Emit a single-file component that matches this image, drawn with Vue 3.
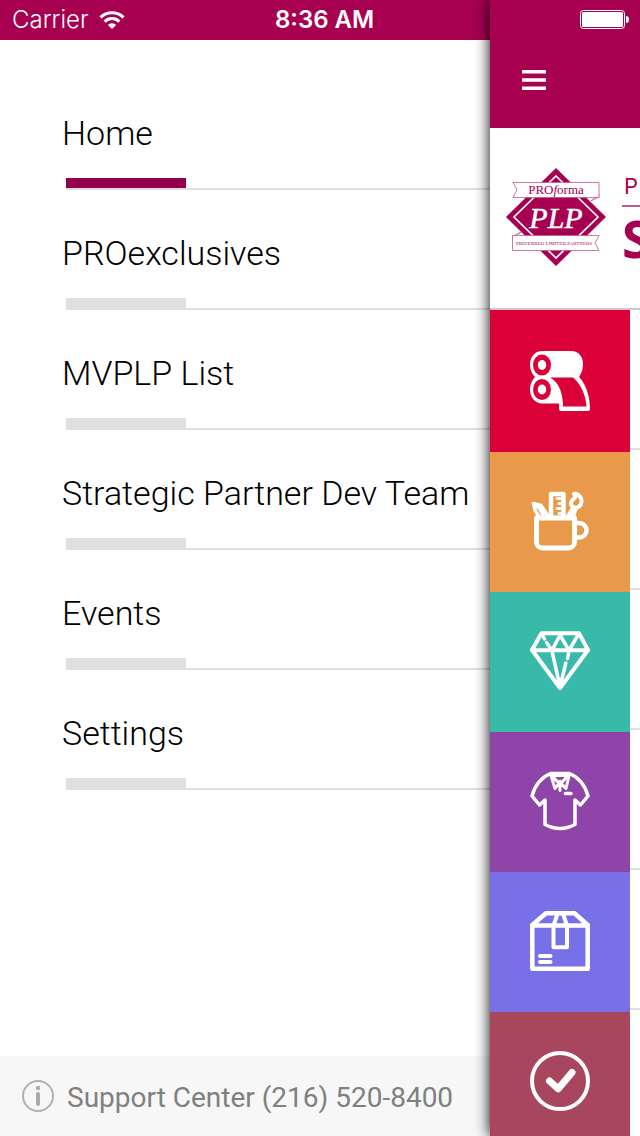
<script setup>
import { ref } from 'vue'

const active = ref(0)
const menu = ['Home', 'PROexclusives', 'MVPLP List', 'Strategic Partner Dev Team', 'Events', 'Settings']
const categories = ['paper', 'promo', 'awards', 'apparel', 'packaging', 'approved']
</script>

<template>
  <div class="app">
    <header class="status">
      <div class="carrier">
        <span>Carrier</span>
        <svg width="26" height="18" viewBox="0 0 26 18" fill="none" stroke="#fff" stroke-width="3" aria-hidden="true">
          <path d="M1.5 6.3a16.5 16.5 0 0 1 23 0" />
          <path d="M5.6 10.6a10.6 10.6 0 0 1 14.8 0" />
          <path d="M8.8 14a6 6 0 0 1 8.4 0L13 18z" fill="#fff" stroke="none" />
        </svg>
      </div>
      <time>8:36 AM</time>
      <svg class="battery" width="50" height="20" viewBox="0 0 50 20" aria-hidden="true">
        <rect x="0.5" y="0.5" width="44" height="18" rx="3" fill="none" stroke="#fff" />
        <rect x="2" y="2" width="41" height="15" rx="1.5" fill="#fff" />
        <path d="M46 6q3 0 3 3.500t-3 3.500z" fill="#fff" />
      </svg>
    </header>

    <aside class="drawer">
      <nav>
        <ul>
          <li v-for="(item, i) in menu" :key="item" :class="{ active: i === active }">
            <a href="#" @click.prevent="active = i">{{ item }}</a>
          </li>
        </ul>
      </nav>
      <a class="support" href="tel:2165208400">
        <svg width="32" height="32" viewBox="0 0 32 32" aria-hidden="true">
          <circle cx="16" cy="16" r="15" fill="none" stroke="#b0b0b0" stroke-width="2" />
          <circle cx="16" cy="8" r="2.200" fill="#aaa" />
          <path d="M16 14v10" stroke="#aaa" stroke-width="4" stroke-linecap="round" />
        </svg>
        <span>Support Center (216) 520-8400</span>
      </a>
    </aside>

    <main class="page">
      <div class="toolbar">
        <button class="toggle" type="button" aria-label="Menu">
          <svg width="24" height="20" viewBox="0 0 24 20" fill="#fff" aria-hidden="true">
            <path d="M0 0h24v3.500H0zM0 8.300h24v3.500H0zM0 16.500h24V20H0z" />
          </svg>
        </button>
      </div>

      <div class="brand">
        <svg class="logo" width="100" height="98" viewBox="0 0 100 98">
          <path d="M50 0l50 49-50 49L0 49z" fill="#a70050" />
          <path d="M50 8l42 41-42 41L8 49z" fill="none" stroke="#fff" stroke-width="1.700" />
          <g fill="#fff" stroke="#c4588c" stroke-width="0.800">
            <path d="M85 33l8-4v-3z" />
            <path d="M7 14.500h86v15H7l4-7.500z" />
            <path d="M15 64l-8 4v3z" />
            <path d="M93 67.500H6.500v15H93l-4-7.500z" />
          </g>
          <g fill="#a70050" text-anchor="middle" font-family="'Liberation Serif', serif">
            <text x="50" y="26" font-size="13">PRO<tspan font-style="italic">f</tspan>orma</text>
            <text x="48" y="77" font-size="5">PREFERRED LIMITED PARTNERS</text>
            <text x="50" y="60" font-size="30" font-style="italic" fill="#fff" stroke="#fff" stroke-width="0.500">PLP</text>
          </g>
        </svg>
        <div class="title">
          <span>P</span>
          <strong>S</strong>
        </div>
      </div>

      <div class="list">
        <div class="tiles">
          <button v-for="c in categories" :key="c" type="button" :class="['tile', c]" :aria-label="c">
            <svg v-if="c === 'paper'" viewBox="0 0 60 60" fill="#fff">
              <path d="M12 0H41C49 0 53 6 53 13.500C53 19 51 23 49 26C57 34 60 48 60 58q0 2-2 2H31q-2 0-2-2V52.500H12C5 52.500 0 46 0 38.500C0 33 2 29 5 26C2 23 0 19 0 13.500C0 6 5 0 12 0z" />
              <g fill="#dc0038">
                <ellipse cx="12" cy="14" rx="9" ry="10.500" />
                <ellipse cx="12" cy="38.500" rx="9" ry="10.500" />
                <path d="M20 26.500H43C51 33 56 45 56.500 55.500H33C33 44 30 32 20 26.500z" />
              </g>
              <ellipse cx="12" cy="14" rx="4.200" ry="5" />
              <ellipse cx="12" cy="38.500" rx="4.200" ry="5" />
            </svg>
            <svg v-else-if="c === 'promo'" viewBox="0 0 60 60" class="line">
              <path d="M6.500 27h38v24a6 6 0 0 1-6 6h-26a6 6 0 0 1-6-6z" stroke-width="5" />
              <path d="M46 32h3a7.500 7.200 0 0 1 0 14.500h-3" stroke-width="4.500" />
              <path d="M21 25V3h12.500v22" stroke-width="4.500" />
              <path d="M33 7.500h-6M33 12.500h-4M33 17.500h-6M33 22.500h-4" stroke-width="3" />
              <path d="M18 25l-7-10.500-7.500-2L5 19l3.500 6M4 13l5 4M10 18l3 6" stroke-width="3.500" />
              <path d="M37 26l6-9.500M43 26l3-8M40 26l4-8" stroke-width="3.500" />
              <path d="M44 2.800c5 0 8 4 7.500 8.500c-.5 4-4 6-7 5.200c-4-1-4.500-5-2-7.500c2-2 4.500-3 1.500-6.200z" stroke-width="4" />
            </svg>
            <svg v-else-if="c === 'awards'" viewBox="0 0 60 60" class="line" stroke-width="4">
              <path d="M11.500 2.200h37.500L58 19 30 57 2 19z" />
              <path d="M2 19.200h56" />
              <path d="M12 3l2.500 5M16.500 11.500L22 19.500 30 4l9 15.500L48 4" stroke-width="3.500" />
              <path d="M22 20l8 36 5.800-24M37.500 27.500L39 20" stroke-width="3.500" />
            </svg>
            <svg v-else-if="c === 'apparel'" viewBox="0 0 60 60" class="line" stroke-width="3.500">
              <path d="M20.500 2.500h19C49 6.500 55 14 58 25l-7.500 9-5.500-5v24.500q-15 8-30 0V29l-5.500 5L2 25C5 14 11 6.500 20.500 2.500z" />
              <path d="M20.500 3l4.500 14.500 4-5L22 4.500h16l-7 8 5 5L39.500 3M30 10v9.500" stroke-width="3" />
              <path d="M35.500 22.500h5.500" />
            </svg>
            <svg v-else-if="c === 'packaging'" viewBox="0 0 60 60" class="line" stroke-width="4.500">
              <path d="M2.300 14.500h55.400v43.200H2.300z" />
              <path d="M2.300 14L16 2.300h28.500L57.700 14" />
              <path d="M27.500 3l-4 11.500V36.200H37V14.500L33 3" stroke-width="4" />
              <path d="M10 45h10.500M10 51h10.500" stroke-width="4" />
            </svg>
            <svg v-else viewBox="0 0 60 60" class="line">
              <circle cx="30" cy="30" r="28" stroke-width="4" />
              <path d="M19.500 30l8.800 7.800L42 21.500" stroke-width="7" />
            </svg>
          </button>
        </div>
        <div class="rows">
          <div v-for="c in categories" :key="c" class="row"></div>
        </div>
      </div>
    </main>
  </div>
</template>

<style>
body {
  margin: 0;
}
</style>

<style scoped>
* {
  box-sizing: border-box;
}

.app {
  position: relative;
  display: flex;
  height: 100vh;
  overflow: hidden;
  background: #fff;
  font-family: Roboto, "Liberation Sans", sans-serif;
}

.status {
  position: absolute;
  inset: 0 0 auto;
  z-index: 2;
  display: grid;
  grid-template-columns: 43% auto 1fr;
  column-gap: 4px;
  align-items: center;
  height: 40px;
  padding-right: 10px;
  color: #fff;
  font: 24px/40px Inter, "Liberation Sans", sans-serif;
}

.carrier {
  display: flex;
  align-items: center;
  gap: 10px;
  padding-left: 12px;
  font-weight: 300;
}

.status time {
  font-weight: 600;
}

.battery {
  justify-self: end;
}

.drawer {
  display: flex;
  flex: 1;
  flex-direction: column;
  min-width: 0;
  border-top: 40px solid #a70050;
}

nav {
  flex: 1;
}

ul {
  margin: 0;
  padding: 30px 0 0 62px;
  list-style: none;
}

li a {
  display: block;
  height: 108px;
  color: #000;
  font-size: 34px;
  font-weight: 300;
  line-height: 126px;
  text-decoration: none;
  white-space: nowrap;
}

li::after {
  content: "";
  display: block;
  height: 10px;
  margin-left: 4px;
  border-bottom: 2px solid #e0e0e0;
  background: linear-gradient(#e0e0e0, #e0e0e0) no-repeat left / 120px 100%;
}

li.active::after {
  background-image: linear-gradient(#93004b, #93004b);
}

.support {
  display: flex;
  align-items: center;
  gap: 13px;
  height: 80px;
  padding-left: 22px;
  background: #f7f7f7;
  color: #808080;
  font-size: 28px;
  text-decoration: none;
  white-space: nowrap;
}

.support span {
  padding-top: 2px;
}

.page {
  z-index: 1;
  display: flex;
  flex: 0 0 150px;
  flex-direction: column;
  min-width: 0;
  background: #fff;
  box-shadow: 0 0 14px #000;
}

.toolbar {
  display: flex;
  flex: none;
  height: 128px;
  padding: 60px 22px 28px;
  background: #a70050;
}

.toggle {
  display: flex;
  align-items: center;
  padding: 0 10px;
  border: 0;
  background: none;
}

.brand {
  display: flex;
  flex: none;
  gap: 16px;
  height: 182px;
  padding: 40px 0 0 16px;
  border-bottom: 2px solid #c8c8c8;
  overflow: hidden;
}

.logo {
  flex: none;
}

.title {
  flex: none;
  color: #a70050;
}

.title span {
  display: block;
  height: 39px;
  padding: 2px 2px 0;
  border-bottom: 2px solid #c4588c;
  font: 22px/32px Inter, sans-serif;
}

.title strong {
  display: block;
  font: 700 52px/62px "Open Sans", sans-serif;
}

.list {
  display: flex;
  flex: 1;
  min-height: 0;
  overflow: hidden;
}

.tiles {
  flex: 0 0 140px;
}

.tile {
  display: flex;
  align-items: center;
  justify-content: center;
  width: 100%;
  height: 140px;
  padding: 0 0 2px;
  border: 0;
}

.tile svg {
  width: 60px;
  height: 60px;
}

.line {
  fill: none;
  stroke: #fff;
  stroke-linecap: round;
  stroke-linejoin: round;
}

.paper {
  height: 142px;
  padding: 0;
  background: #dc0038;
}

.promo {
  background: #e89a4a;
}

.awards {
  background: #38b9aa;
}

.apparel {
  background: #8e44a9;
}

.packaging {
  background: #7870e7;
}

.approved {
  background: #a8465d;
}

.rows {
  flex: 1;
}

.row {
  height: 140px;
  border-bottom: 2px solid #e0e0e0;
}
</style>
